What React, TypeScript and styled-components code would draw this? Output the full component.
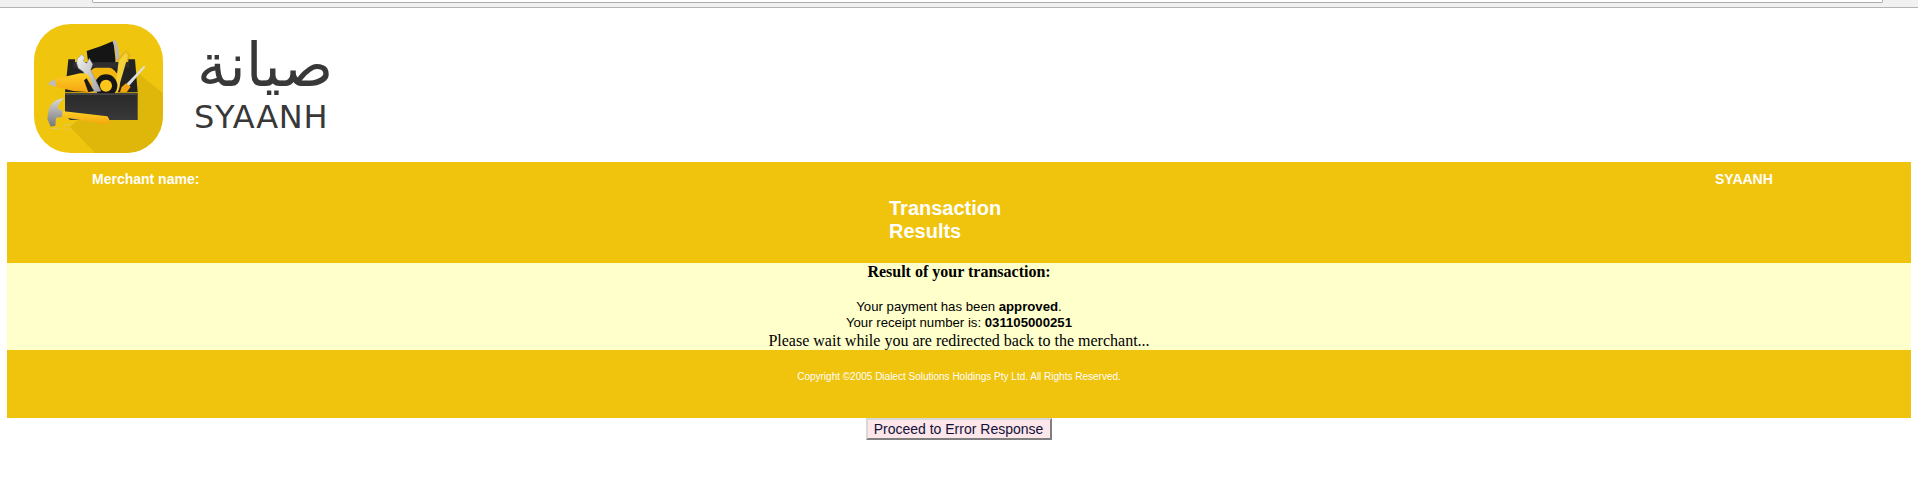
import React from "react";
import styled, { createGlobalStyle } from "styled-components";

const Global = createGlobalStyle`
  html, body { margin: 0; padding: 0; background: #fff; }
  body { font-family: "Liberation Serif", "Times New Roman", serif; font-size: 16px; color: #000; }
`;

const Page = styled.div`
  width: 1918px;
  height: 495px;
  overflow: hidden;
  display: flex;
  flex-direction: column;
`;

const BrowserEdge = styled.div`
  height: 7px;
  background: #f1f1f1;
  border-bottom: 1px solid #b4b4b4;
  padding: 0 35px 0 92px;
`;

const AddressBar = styled.div`
  height: 2px;
  background: #fff;
  border: 1px solid #ababab;
  border-top: 0;
  border-radius: 0 0 2px 2px;
`;

const Header = styled.header`
  height: 154px;
  display: flex;
  align-items: flex-start;
  padding: 16px 0 0 34px;
  box-sizing: border-box;
`;

const Wordmark = styled.div`
  margin-left: 31px;
  display: flex;
  flex-direction: column;
  align-items: flex-start;
  color: #383838;
  font-family: "DejaVu Sans", sans-serif;
`;

const ArabicName = styled.div`
  font-size: 60px;
  line-height: 72px;
  height: 72px;
  width: 142px;
  text-align: center;
  margin-top: 5px;
`;

const LatinName = styled.div`
  font-size: 32px;
  line-height: 33px;
  letter-spacing: 0.7px;
`;

const Band = styled.section`
  margin: 0 7px;
  background: #f0c30c;
  color: #fff;
  font-family: "Liberation Sans", Arial, sans-serif;
`;

const TitleBand = styled(Band)`
  height: 101px;
  box-sizing: border-box;
  padding-top: 9px;
`;

const MerchantRow = styled.div`
  display: grid;
  grid-template-columns: 1623px auto;
  padding-left: 85px;
  font-size: 14px;
  font-weight: 700;
  line-height: 16px;
`;

const Title = styled.h1`
  margin: 10px 0 0 882px;
  width: 130px;
  font-size: 20px;
  font-weight: 700;
  line-height: 23px;
`;

const ResultPanel = styled.section`
  margin: 0 7px;
  height: 87px;
  background: #ffffcc;
  text-align: center;
  box-sizing: border-box;
  overflow: hidden;
`;

const ResultHeading = styled.div`
  font-weight: 700;
  font-size: 16px;
  line-height: 18px;
  margin-bottom: 18px;
`;

const Detail = styled.div`
  font-family: "Liberation Sans", Arial, sans-serif;
  font-size: 13.2px;
  line-height: 16px;
`;

const Waiting = styled.div`
  font-size: 16px;
  line-height: 18px;
  margin-top: 1px;
`;

const FooterBand = styled(Band)`
  height: 68px;
  box-sizing: border-box;
  padding: 21px 0 0 0;
  text-align: center;
  font-size: 10px;
  line-height: 12px;
`;

const ButtonRow = styled.div`
  display: flex;
  justify-content: center;
  padding-right: 1px;
`;

const ProceedButton = styled.button`
  width: 186px;
  height: 22px;
  padding: 0;
  box-sizing: border-box;
  background: #fce6e9;
  color: #10103a;
  border: 2px solid;
  border-color: #d8d8d8 #7f7f7f #7f7f7f #d8d8d8;
  font-family: "Liberation Sans", Arial, sans-serif;
  font-size: 14px;
  line-height: 16px;
`;

const LogoSvg = styled.svg`
  flex: none;
  width: 129px;
  height: 129px;
`;

const LogoIcon = () => (
  <LogoSvg viewBox="42 27 387 387" aria-hidden>
    <defs>
      <clipPath id="tile"><rect x="42" y="27" width="387" height="387" rx="110" /></clipPath>
      <linearGradient id="steel" x1="0" x2="1" y1="0" y2="1">
        <stop offset="0" stopColor="#f4f4f4" /><stop offset="1" stopColor="#a3a3a3" />
      </linearGradient>
      <linearGradient id="hammerSteel" x1="0" x2="0" y1="0" y2="1">
        <stop offset="0" stopColor="#d9d9d9" /><stop offset="1" stopColor="#777" />
      </linearGradient>
      <linearGradient id="orange" x1="0" x2="0" y1="0" y2="1">
        <stop offset="0" stopColor="#ffd126" /><stop offset="1" stopColor="#f4a50f" />
      </linearGradient>
      <linearGradient id="box" x1="0" x2="0" y1="0" y2="1">
        <stop offset="0" stopColor="#2a2a2a" /><stop offset="1" stopColor="#383838" />
      </linearGradient>
    </defs>
    <g clipPath="url(#tile)">
      <rect x="42" y="27" width="387" height="387" fill="#f0c50d" />
      <path d="M350 170L428 235V414H225L150 335Z" fill="#dfb70b" />
      <path d="M200 108C225 100 255 90 280 78L288 145H205Z" fill="#151515" />
      <path d="M277 78L287 75C295 95 302 120 295 150H285C290 125 287 100 277 78Z" fill="#b8b8b8" />
      <path d="M290 135L318 105L332 120L300 232H272Z" fill="#e4b414" />
      <path d="M145 133H165V142H325V133H345L353 232H135Z" fill="#222" />
      <circle cx="248" cy="205" r="52" fill="#f1b70f" />
      <rect x="160" y="142" width="168" height="16" rx="3" fill="#2e2e2e" />
      <path d="M296 138L318 112L324 122L292 232H284Z" fill="#f5d13c" />
      <circle cx="258" cy="212" r="34" fill="#151515" />
      <circle cx="258" cy="212" r="18" fill="#fbc51a" />
      <path d="M135 235H353V315H150L135 300Z" fill="url(#box)" />
      <path d="M135 235H353V240H135Z" fill="#444" />
      <path d="M172 132L185 118L195 128L190 138L200 145L208 130L218 148L212 165L243 228L222 232L190 170L175 160L170 145Z" fill="url(#steel)" stroke="#8a8a8a" strokeWidth="1.5" />
      <path d="M82 207L105 192L180 175C195 173 203 176 207 182L218 210L212 232L160 228L135 222L105 215Z" fill="url(#orange)" />
      <path d="M82 207L105 192L108 215Z" fill="#bdbdbd" />
      <path d="M192 196L200 190L222 228L205 232Z" fill="#1b1b1b" />
      <path d="M372 152L376 156L325 215L318 208Z" fill="#dedede" />
      <path d="M318 205L332 215L320 232H300L305 216Z" fill="#f4a50f" />
      <path d="M125 288L262 304C268 310 270 320 268 325L258 328L125 306Z" fill="url(#orange)" />
      <path d="M132 250C105 252 88 268 85 290L82 312L92 335L106 332L108 308L126 306L128 288L112 280C115 268 122 258 132 250Z" fill="url(#hammerSteel)" />
      <path d="M92 339H112V341H92ZM114 335H117V342H114ZM131 330L158 326V328L131 332ZM130 341H155V343H130Z" fill="#d6c88f" />
    </g>
  </LogoSvg>
);

export default function App() {
  return (
    <Page>
      <Global />
      <BrowserEdge><AddressBar /></BrowserEdge>
      <Header>
        <LogoIcon />
        <Wordmark>
          <ArabicName dir="rtl">صيانة</ArabicName>
          <LatinName>SYAANH</LatinName>
        </Wordmark>
      </Header>
      <TitleBand>
        <MerchantRow>
          <span>Merchant name:</span>
          <span>SYAANH</span>
        </MerchantRow>
        <Title>Transaction Results</Title>
      </TitleBand>
      <ResultPanel>
        <ResultHeading>Result of your transaction:</ResultHeading>
        <Detail>Your payment has been <b>approved</b>.</Detail>
        <Detail>Your receipt number is: <b>031105000251</b></Detail>
        <Waiting>Please wait while you are redirected back to the merchant...</Waiting>
      </ResultPanel>
      <FooterBand>Copyright ©2005 Dialect Solutions Holdings Pty Ltd. All Rights Reserved.</FooterBand>
      <ButtonRow>
        <ProceedButton type="button">Proceed to Error Response</ProceedButton>
      </ButtonRow>
    </Page>
  );
}
